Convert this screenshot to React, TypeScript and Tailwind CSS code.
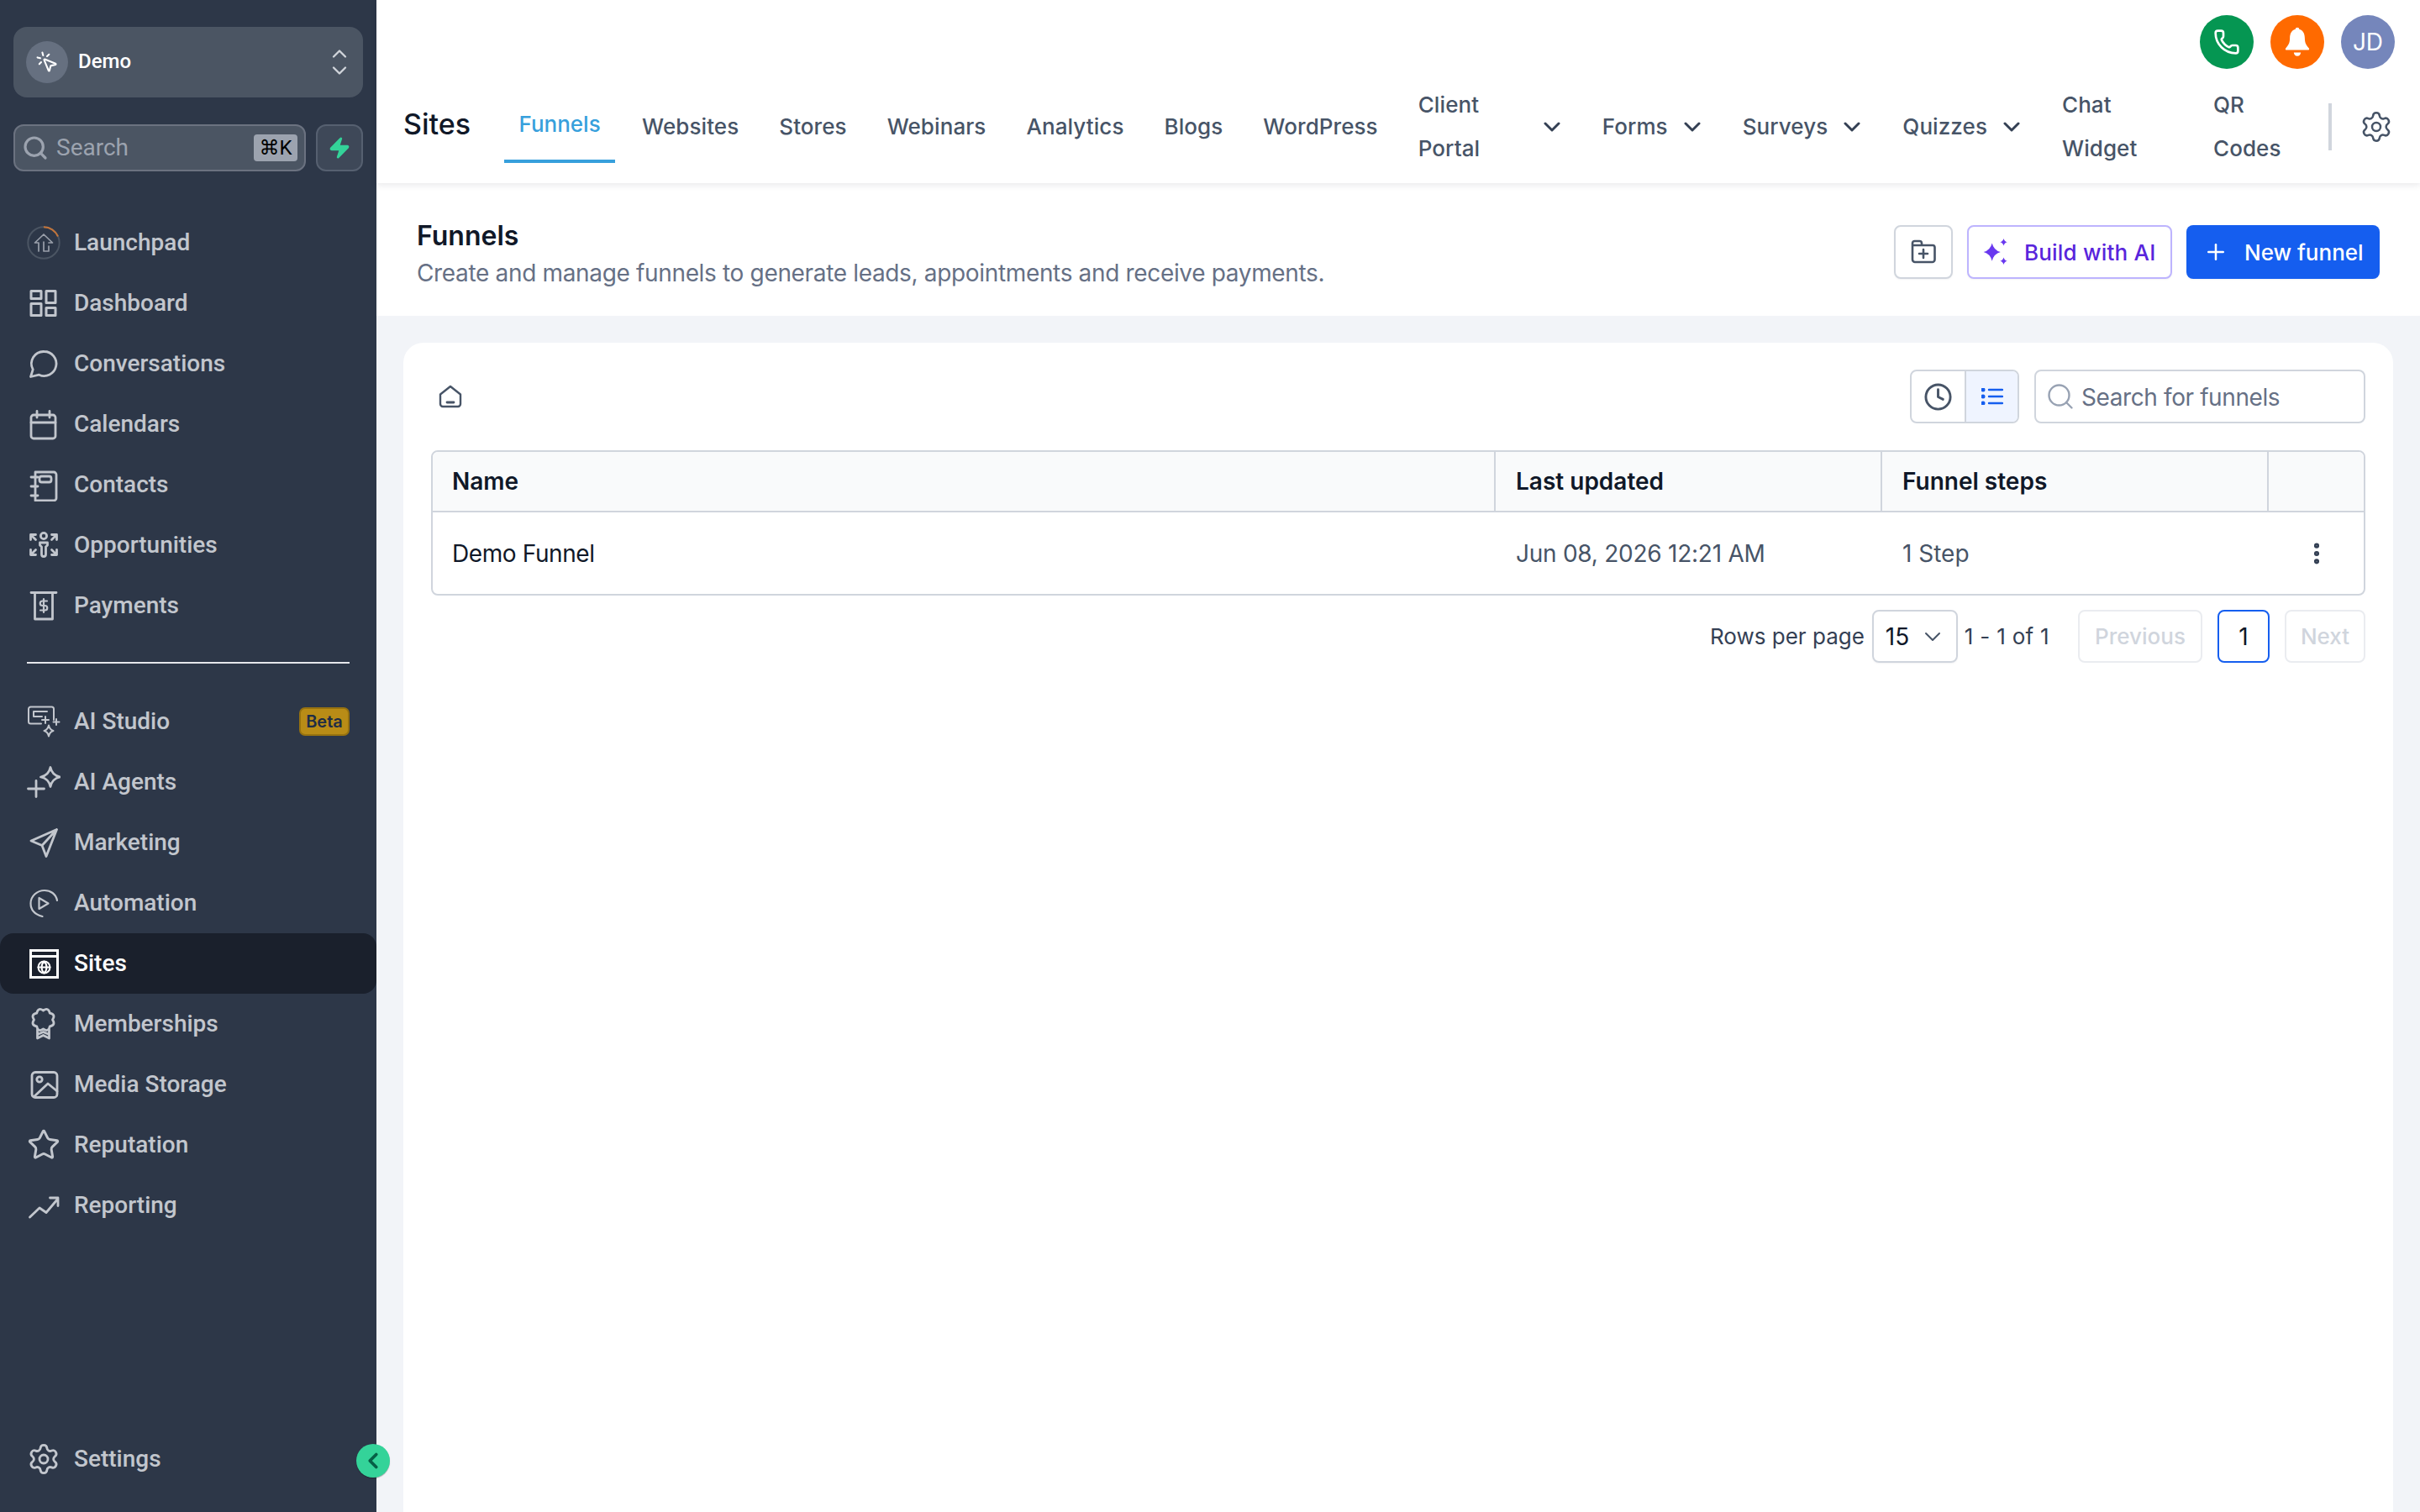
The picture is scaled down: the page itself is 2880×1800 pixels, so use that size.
import React from "react";
import { ChevronDown, ChevronLeft, ChevronUp, Clock, EllipsisVertical, MousePointerClick, Phone, Plus, Search, Settings, Star, Zap } from "lucide-react";

const rosette = (() => {
  const n = 8;
  const at = (r: number, a: number) => [(19.5 + r * Math.cos(a)).toFixed(1), (15 + r * Math.sin(a)).toFixed(1)].join(" ");
  let d = `M${at(11, -Math.PI / 2)}`;
  for (let i = 0; i < n; i++) {
    const a0 = -Math.PI / 2 + (i / n) * Math.PI * 2;
    const a1 = -Math.PI / 2 + ((i + 1) / n) * Math.PI * 2;
    d += ` Q${at(16.5, (a0 + a1) / 2)} ${at(11, a1)}`;
  }
  return d + "z";
})();

const I = ({ children, sw = 2.8 }: { children: React.ReactNode; sw?: number }) => (
  <svg viewBox="0 0 40 40" className="w-[40px] h-[40px] shrink-0" fill="none" stroke="currentColor" strokeWidth={sw} strokeLinecap="round" strokeLinejoin="round">
    {children}
  </svg>
);

const LaunchIcon = () => (
  <svg viewBox="0 0 40 40" className="w-[40px] h-[40px] shrink-0" fill="none" strokeLinecap="round" strokeLinejoin="round">
    <circle cx="20" cy="20" r="18.7" stroke="#4b5563" strokeWidth="2" />
    <path d="M20 1.3A18.7 18.7 0 0 1 37 12.5" stroke="#c2743a" strokeWidth="2" strokeLinecap="butt" />
    <path d="M14 30V20H9.5L20 10l10.5 10H26M20 19v11h6v-6" stroke="#9aa0ab" strokeWidth="1.7" />
  </svg>
);

const icons: Record<string, React.ReactNode> = {
  Launchpad: <LaunchIcon />,
  Dashboard: (
    <I sw={3}>
      <rect x="5" y="5.5" width="12" height="9" />
      <rect x="23" y="5.5" width="11" height="14" />
      <rect x="5" y="20.5" width="12" height="14" />
      <rect x="23" y="25.5" width="11" height="9" />
    </I>
  ),
  Conversations: (
    <I>
      <path d="M20.5 5.5a14.5 14.5 0 1 1-6 27.7L4.5 35.5l2.7-8.6A14.5 14.5 0 0 1 20.5 5.5z" />
    </I>
  ),
  Calendars: (
    <I>
      <rect x="5" y="9" width="29" height="28" rx="3" />
      <path d="M5 18h29M12 4.5V12M27 4.5V12" />
    </I>
  ),
  Contacts: (
    <I>
      <path d="M10 5h22a3 3 0 0 1 3 3v28a3 3 0 0 1-3 3H10V5z" />
      <rect x="15" y="10" width="14" height="7" rx="2.5" />
      <path d="M5 11h8M5 22h8M5 33h8" />
    </I>
  ),
  Opportunities: (
    <I>
      <circle cx="20" cy="9" r="3.6" />
      <path d="M15.5 17h9v3l-2 2v9a2.5 2.5 0 0 1-5 0v-9l-2-2z" />
      <path d="M4.5 7.5h6M4.5 7.5v6M4.5 7.5l6 6M35.500 7.5h-6M35.500 7.5v6M35.500 7.5l-6 6M4.5 31.5h6M4.5 31.5v-6M4.5 31.5l6-6M35.500 31.5h-6M35.500 31.5v-6M35.500 31.5l-6-6" />
    </I>
  ),
  Payments: (
    <I>
      <path d="M5 4.5h30M9.500 4.5V36h21V4.5" />
      <path d="M24 14.500h-5.500a2.700 2.700 0 0 0 0 5.500h3a2.700 2.700 0 0 1 0 5.500H16M20 12v16" strokeWidth="2.200" />
    </I>
  ),
  "AI Studio": (
    <I sw={2}>
      <path d="M32 18V5a2.500 2.500 0 0 0-2.500-2.500h-25A2.500 2.500 0 0 0 2 5v15a2.500 2.500 0 0 0 2.500 2.500H17" />
      <path d="M8 14V8h16M8 14h10M22 14v8M18 18h8M35 17v7M31.500 20.500h7" />
      <path d="M26 24.500c.8 4 2 5.500 5.500 6.500-3.500 1-4.700 2.500-5.500 6.500-.8-4-2-5.500-5.500-6.500 3.500-1 4.700-2.500 5.500-6.500z" />
    </I>
  ),
  "AI Agents": (
    <I>
      <path d="M11 18.500v19M1.500 28h19" />
      <path d="M28 2.500Q30 12 39.500 14 30 16 28 25.500 26 16 16.500 14 26 12 28 2.500z" />
    </I>
  ),
  Marketing: (
    <I>
      <path d="M35.500 4.500L5 18l13 5.500 5 13zM35.500 4.500L18 23.500" />
    </I>
  ),
  Automation: (
    <I sw={2.2}>
      <path d="M36 17C34.500 9 28 5 21 5 12 5 4.500 12 4.500 20.500S11 34 18.500 36" />
      <path d="M14.500 14v13l11-6.500z" />
    </I>
  ),
  Sites: (
    <I sw={3}>
      <path strokeLinejoin="miter" d="M4.500 4.500h32v32h-32zM4.500 11.500h32" />
      <g strokeWidth="2">
        <circle cx="20.500" cy="24.500" r="7" />
        <path d="M13.500 24.500h14M20.500 17.500c-4 4-4 10 0 14M20.500 17.500c4 4 4 10 0 14" />
      </g>
    </I>
  ),
  Memberships: (
    <I>
      <path d={rosette} />
      <path d="M12.500 27v10l7-3.500 7 3.500V27M12.500 32.500l7-3 7 3" />
    </I>
  ),
  "Media Storage": (
    <I>
      <rect x="6" y="5.500" width="30" height="30" rx="4" />
      <circle cx="15" cy="14" r="3.200" />
      <path d="M9 34l16-15 11 9" />
    </I>
  ),
  Reputation: <Star size={40} strokeWidth={1.8} className="shrink-0" />,
  Reporting: (
    <I>
      <path d="M3.500 34L15 23l8 5.500L37 12M27.500 11H37v9.500" />
    </I>
  ),
};

const NavItem = ({ label, active, badge }: { label: string; active?: boolean; badge?: boolean }) => (
  <div className={`flex items-center h-[72px] pl-[32px] pr-[32px] gap-[16px] rounded-[16px] ${active ? "bg-[#1a202c] text-white" : "text-[#c2c6cd]"}`}>
    {icons[label]}
    <span className="text-[28px] leading-[40px] font-medium">{label}</span>
    {badge && (
      <span className="ml-auto w-[60px] h-[34px] flex items-center justify-center rounded-[7px] bg-[#b98c16] border-2 border-[#97720f] text-[#1f2d45] text-[20px] font-semibold font-['Inter',sans-serif]">
        Beta
      </span>
    )}
  </div>
);

const Chev = () => (
  <svg viewBox="0 0 20 12" className="w-[20px] h-[12px] ml-[19px] mr-[2px] shrink-0" fill="none" stroke="#344054" strokeWidth="3" strokeLinecap="round" strokeLinejoin="round">
    <path d="M2 2l8 8 8-8" />
  </svg>
);

const Tab = ({ children, chev, w }: { children: React.ReactNode; chev?: boolean; w?: string }) => (
  <div className="flex items-center px-[16px] text-[26px] tracking-[0.08px] font-medium text-[#475467] leading-[52px]">
    <span className={w}>{children}</span>
    {chev && <Chev />}
  </div>
);

export default function App() {
  return (
    <div className="relative flex w-[2880px] h-[1800px] overflow-hidden bg-[#f2f4f8] font-['Inter',sans-serif]">
      <aside className="w-[448px] shrink-0 h-full flex flex-col bg-[#2d3748] font-['Roboto',sans-serif]">
        <div className="mx-[16px] mt-[32px] h-[84px] rounded-[16px] bg-[#4b5563] flex items-center pl-[15px] pr-[14px]">
          <div className="w-[50px] h-[50px] rounded-full bg-[#667080] flex items-center justify-center text-white">
            <MousePointerClick size={28} strokeWidth={1.8} />
          </div>
          <span className="ml-[12px] text-[24px] font-medium text-white leading-[32px] -mt-[3px]">Demo</span>
          <div className="ml-auto flex flex-col items-center text-[#d1d5db]">
            <ChevronUp size={28} strokeWidth={2} className="-mb-[4px]" />
            <ChevronDown size={28} strokeWidth={2} className="-mt-[4px]" />
          </div>
        </div>
        <div className="mx-[16px] mt-[32px] flex gap-[12px]">
          <div className="flex-1 h-[56px] rounded-[12px] bg-[#4b5563] border-2 border-[#6b7280] flex items-center pl-[8px] pr-[8px]">
            <Search size={32} strokeWidth={2.4} className="text-[#9ca3af]" />
            <span className="ml-[9px] text-[28px] text-[#9ca3af]">Search</span>
            <span className="ml-auto h-[32px] w-[52px] rounded-[4px] bg-[#9ca3af] text-black text-[24px] flex items-center justify-center font-['Roboto','DejaVu_Sans',sans-serif]">⌘K</span>
          </div>
          <div className="w-[56px] h-[56px] rounded-[12px] bg-[#3e4858] border-2 border-[#566070] flex items-center justify-center">
            <Zap size={28} className="text-[#34d399] fill-[#34d399]" strokeWidth={1.5} />
          </div>
        </div>
        <nav className="mt-[49px] flex flex-col">
          {["Launchpad", "Dashboard", "Conversations", "Calendars", "Contacts", "Opportunities", "Payments"].map((l) => (
            <NavItem key={l} label={l} />
          ))}
          <div className="mx-[32px] mt-[31px] mb-[33px] h-[2px] bg-[#e5e7eb]" />
          <NavItem label="AI Studio" badge />
          {["AI Agents", "Marketing", "Automation"].map((l) => (
            <NavItem key={l} label={l} />
          ))}
          <NavItem label="Sites" active />
          {["Memberships", "Media Storage", "Reputation", "Reporting"].map((l) => (
            <NavItem key={l} label={l} />
          ))}
        </nav>
        <div className="mt-auto mb-[27px] flex items-center h-[72px] pl-[32px] gap-[16px] text-[#c2c6cd]">
          <Settings size={40} strokeWidth={1.7} />
          <span className="text-[28px] leading-[40px] font-medium">Settings</span>
        </div>
      </aside>

      <main className="flex-1 min-w-0 flex flex-col h-full">
        <header className="relative z-10 h-[218px] bg-white shadow-[0_2px_8px_rgba(16,24,40,0.1)] flex flex-col shrink-0">
          <div className="h-[96px] flex justify-end items-start pt-[18px] pr-[30px] gap-[20px]">
            <div className="w-[64px] h-[64px] rounded-full bg-[#059652] flex items-center justify-center text-white">
              <Phone size={32} strokeWidth={2} />
            </div>
            <div className="w-[64px] h-[64px] rounded-full bg-[#ff6a00] flex items-center justify-center">
              <svg viewBox="0 0 32 32" className="w-[38px] h-[38px]" fill="#fff">
                <circle cx="16" cy="3.500" r="2" />
                <path d="M16 3c-5.500 0-7.500 4.500-7.500 9.500 0 4.500-1.500 7-4 9.500-.8.8-.4 2 .8 2h21.400c1.200 0 1.600-1.200.8-2-2.500-2.500-4-5-4-9.500C23.500 7.500 21.500 3 16 3z" />
                <path d="M12.500 26.500h7a3.500 3.500 0 0 1-7 0z" />
              </svg>
            </div>
            <div className="w-[64px] h-[64px] rounded-full bg-[#7586bb] flex items-center justify-center text-white text-[28px]">JD</div>
          </div>
          <div className="h-[110px] flex items-center pl-[32px] pr-[32px]">
            <span className="text-[34px] font-medium text-[#101828] leading-[48px] -mt-[6px]">Sites</span>
            <div className="ml-[40px] flex items-center gap-[16px]">
              <div className="w-[132px] h-[88px] mb-[2px] flex items-center justify-center border-b-4 border-[#37a0dc] text-[26px] font-medium text-[#37a0dc] leading-[40px]">Funnels</div>
              <Tab>Websites</Tab>
              <Tab>Stores</Tab>
              <Tab>Webinars</Tab>
              <Tab>Analytics</Tab>
              <Tab>Blogs</Tab>
              <Tab>WordPress</Tab>
              <Tab chev w="w-[130px]">Client Portal</Tab>
              <Tab chev>Forms</Tab>
              <Tab chev>Surveys</Tab>
              <Tab chev>Quizzes</Tab>
              <Tab w="w-[132px]">Chat Widget</Tab>
              <Tab w="w-[80px]">QR Codes</Tab>
            </div>
            <div className="ml-auto w-[4px] h-[56px] bg-[#d0d5dd] mr-[33px]" />
            <Settings size={40} strokeWidth={1.5} className="text-[#475467]" />
          </div>
        </header>

        <section className="h-[158px] shrink-0 bg-white pl-[48px] pr-[48px] pt-[41px] flex justify-between items-start">
          <div>
            <div className="text-[32px] font-semibold leading-[44px] text-[#101828]">Funnels</div>
            <div className="mt-[2px] text-[28px] leading-[40px] tracking-[-0.34px] text-[#667085]">Create and manage funnels to generate leads, appointments and receive payments.</div>
          </div>
          <div className="mt-[9px] flex gap-[17px]">
            <div className="w-[70px] h-[64px] rounded-[8px] border-2 border-[#d0d5dd] bg-white flex items-center justify-center shadow-[0_1px_2px_rgba(16,24,40,0.05)]">
              <svg viewBox="0 0 32 32" className="w-[32px] h-[32px]" fill="none" stroke="#475467" strokeWidth="2.600" strokeLinecap="round" strokeLinejoin="round">
                <path d="M3 8V5.500A2.500 2.500 0 0 1 5.500 3h6a2.500 2.500 0 0 1 2.500 2.500V8h13a2.500 2.500 0 0 1 2.500 2.500V25a3 3 0 0 1-3 3H6a3 3 0 0 1-3-3V8h11" />
                <path d="M16 13v10M11 18h10" />
              </svg>
            </div>
            <div className="w-[244px] h-[64px] rounded-[8px] border-2 border-[#bdb4fe] bg-white flex items-center pl-[16px] gap-[16px] text-[26px] tracking-[0.2px] font-medium text-[#5925dc] shadow-[0_1px_2px_rgba(16,24,40,0.05)]">
              <svg viewBox="0 0 32 32" className="w-[34px] h-[34px] shrink-0" fill="#6938ef">
                <path d="M11 6Q13 14 20.500 16 13 18 11 26 9 18 1.500 16 9 14 11 6z" />
                <path d="M24 1Q24.800 4.200 28 5 24.800 5.800 24 9 23.200 5.800 20 5 23.200 4.200 24 1zM24 22Q24.800 25.200 28 26 24.800 26.800 24 30 23.200 26.800 20 26 23.200 25.200 24 22z" />
              </svg>
              <span>Build with AI</span>
            </div>
            <div className="w-[230px] h-[64px] rounded-[8px] bg-[#155eef] flex items-center pl-[20px] gap-[19px] text-[26px] font-medium text-white shadow-[0_1px_2px_rgba(16,24,40,0.05)]">
              <Plus size={30} strokeWidth={2} className="shrink-0" />
              <span>New funnel</span>
            </div>
          </div>
        </section>

        <div className="flex-1 min-h-0 px-[32px] pt-[32px]">
          <div className="h-full bg-white rounded-t-[24px] px-[33px] pt-[32px]">
            <div className="h-[64px] flex items-center justify-between">
              <svg viewBox="0 0 32 32" className="ml-[7px] w-[32px] h-[32px]" fill="none" stroke="#475467" strokeWidth="2.400" strokeLinecap="round" strokeLinejoin="round">
                <path d="M4 13.500L16 4l12 9.500V25a3 3 0 0 1-3 3H7a3 3 0 0 1-3-3z" />
                <path d="M12 23h8" strokeWidth="2.800" />
              </svg>
              <div className="flex gap-[18px]">
                <div className="flex h-[64px] w-[130px] rounded-[8px] border-2 border-[#d0d5dd] overflow-hidden">
                  <div className="w-[65px] border-r-2 border-[#d0d5dd] flex items-center justify-center text-[#475467]">
                    <Clock size={35} strokeWidth={2} />
                  </div>
                  <div className="flex-1 bg-[#eff4ff] flex items-center justify-center">
                    <svg viewBox="0 0 26 20" className="w-[26px] h-[20px]" fill="#155eef" stroke="#155eef" strokeWidth="2.400" strokeLinecap="round">
                      <circle cx="2" cy="2" r="1.300" />
                      <circle cx="2" cy="10" r="1.300" />
                      <circle cx="2" cy="18" r="1.300" />
                      <path d="M9 2h16M9 10h16M9 18h16" />
                    </svg>
                  </div>
                </div>
                <div className="w-[394px] h-[64px] rounded-[8px] border-2 border-[#d0d5dd] flex items-center pl-[11px] gap-[7px]">
                  <Search size={36} strokeWidth={1.6} className="text-[#98a2b3] shrink-0" />
                  <span className="pt-[2px] text-[28px] tracking-[-0.4px] text-[#667085]">Search for funnels</span>
                </div>
              </div>
            </div>

            <div className="mt-[32px] rounded-[8px] border-2 border-[#d0d5dd] overflow-hidden">
              <div className="grid grid-cols-[1265px_460px_460px_1fr] h-[72px] bg-[#f9fafb] border-b-2 border-[#d0d5dd] text-[28px] font-semibold text-[#101828]">
                <div className="pl-[23px] flex items-center border-r-2 border-[#d0d5dd]">Name</div>
                <div className="pl-[24px] flex items-center border-r-2 border-[#d0d5dd]">Last updated</div>
                <div className="pl-[24px] flex items-center border-r-2 border-[#d0d5dd]">Funnel steps</div>
                <div />
              </div>
              <div className="grid grid-cols-[1265px_460px_460px_1fr] h-[97px] text-[28px] text-[#475467]">
                <div className="pl-[23px] flex items-center tracking-[-0.4px] text-[#101828]">Demo Funnel</div>
                <div className="pl-[24px] flex items-center tracking-[-0.25px]">Jun 08, 2026 12:21 AM</div>
                <div className="pl-[24px] flex items-center">1 Step</div>
                <div className="flex items-center justify-center text-[#344054]">
                  <EllipsisVertical size={32} strokeWidth={2.6} />
                </div>
              </div>
            </div>

            <div className="mt-[17px] flex items-center justify-end text-[#344054] text-[26px]">
              <span>Rows per page</span>
              <div className="ml-[9px] w-[102px] h-[63px] rounded-[8px] border-2 border-[#d0d5dd] flex items-center pl-[14px] text-[#101828] text-[28px] shadow-[0_1px_2px_rgba(16,24,40,0.05)]">
                15
                <ChevronDown size={32} strokeWidth={1.5} className="ml-auto mr-[12px] text-[#475467]" />
              </div>
              <span className="ml-[8px] mr-[34px] tracking-[0.3px]">1 - 1 of 1</span>
              <div className="w-[148px] h-[63px] rounded-[8px] border-2 border-[#eaecf0] flex items-center justify-center font-medium text-[#d0d5dd]">Previous</div>
              <div className="ml-[18px] w-[62px] h-[63px] rounded-[8px] border-2 border-[#155eef] flex items-center justify-center text-[#101828] text-[28px]">1</div>
              <div className="ml-[18px] w-[96px] h-[63px] rounded-[8px] border-2 border-[#eaecf0] flex items-center justify-center font-medium text-[#d0d5dd]">Next</div>
            </div>
          </div>
        </div>
      </main>

      <div className="absolute z-20 left-[424px] top-[1719px] w-[40px] h-[40px] rounded-full bg-[#34d399] flex items-center justify-center text-[#065f46] shadow-[0_1px_1px_rgba(0,0,0,0.3)]">
        <ChevronLeft size={30} strokeWidth={3} />
      </div>
    </div>
  );
}
